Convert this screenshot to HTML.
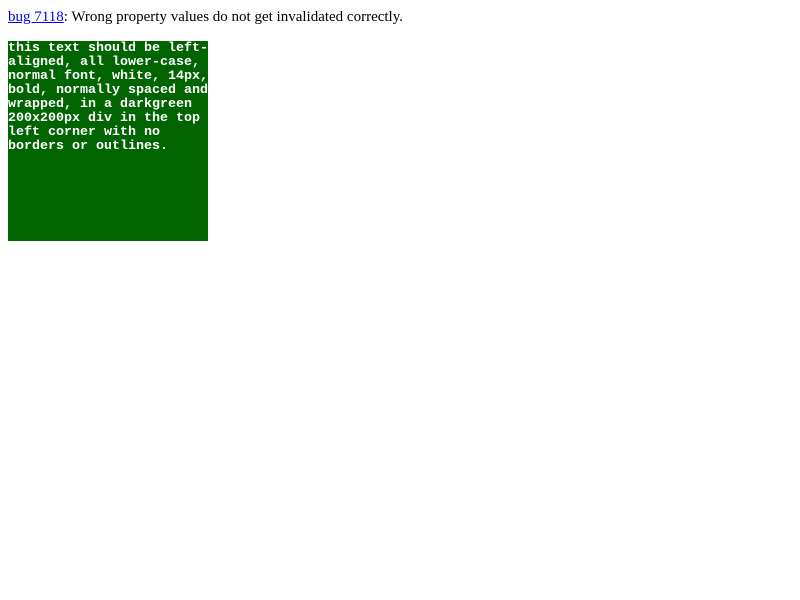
<!DOCTYPE html>
<html><head><style>
body{margin:8px;font-family:"Liberation Serif",serif;font-size:15px;background:#fff;color:#000}
p{margin:0;line-height:18px}
a{color:#00e}
#d{width:200px;height:200px;background:#006400;color:#fff;font:bold 13.33px/14px "Liberation Mono",monospace;white-space:pre;overflow:hidden;margin-top:15px;padding-top:1px;box-sizing:border-box}
</style></head><body>
<p><a href="#">bug 7118</a>: Wrong property values do not get invalidated correctly.</p>
<div id="d">this text should be left-
aligned, all lower-case,
normal font, white, 14px,
bold, normally spaced and
wrapped, in a darkgreen
200x200px div in the top
left corner with no
borders or outlines.</div>
</body></html>
